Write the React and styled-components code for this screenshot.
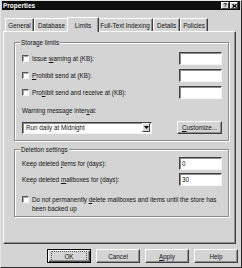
import styled, { createGlobalStyle } from "styled-components";

const GlobalStyle = createGlobalStyle`
  html, body {
    margin: 0;
    padding: 0;
    background: #d4d4d4;
  }
  body {
    font-family: "Liberation Sans", Arial, sans-serif;
    font-size: 6.3px;
    color: #111;
  }
  u {
    text-decoration-thickness: 1px;
    text-underline-offset: 1px;
  }
`;

const Window = styled.div`
  width: 242px;
  height: 268px;
  box-sizing: border-box;
  background: #d4d4d4;
  border: 1px solid;
  border-color: #e4e4e4 #2a2a2a #2a2a2a #e4e4e4;
  display: flex;
  flex-direction: column;
`;

const TitleBar = styled.div`
  height: 9px;
  margin: 0 1px;
  padding: 0 2px 0 1px;
  background: #0e0e0e;
  display: flex;
  align-items: center;
  justify-content: space-between;
`;

const TitleText = styled.span`
  color: #fff;
  font-weight: bold;
  font-size: 6.5px;
  line-height: 9px;
`;

const TitleButtons = styled.div`
  display: flex;
  gap: 1px;
`;

const TitleButton = styled.div`
  width: 8px;
  height: 7px;
  box-sizing: border-box;
  background: #d4d4d4;
  border: 1px solid;
  border-color: #fff #404040 #404040 #fff;
  display: flex;
  align-items: center;
  justify-content: center;
  font-weight: bold;
  font-size: 6px;
  line-height: 5px;
  color: #000;
`;

const TabStrip = styled.div`
  height: 15px;
  margin-top: 6px;
  padding-left: 4px;
  display: flex;
  align-items: flex-end;
`;

const Tab = styled.div`
  width: ${({ $w }) => $w}px;
  height: ${({ $active }) => ($active ? 15 : 13)}px;
  box-sizing: border-box;
  margin: ${({ $active }) => ($active ? "0 -2px -1px -2px" : "0")};
  ${({ $active }) => $active && "padding: 0 2px;"}
  position: relative;
  z-index: ${({ $active }) => ($active ? 2 : 0)};
  background: #d4d4d4;
  border-top: 1px solid #fff;
  border-left: 1px solid #fff;
  border-right: 1px solid #404040;
  box-shadow: inset -1px 0 0 #909090;
  display: flex;
  align-items: center;
  justify-content: center;
  line-height: 7px;
  white-space: nowrap;
`;

const Panel = styled.div`
  height: 213px;
  margin: 0 5px 0 2px;
  box-sizing: border-box;
  border: 1px solid;
  border-color: #fff #404040 #404040 #fff;
  box-shadow: inset -1px -1px 0 #909090;
  padding: 0 6px 0 10px;
  display: flex;
  flex-direction: column;
  position: relative;
  z-index: 1;
`;

const Group = styled.div`
  margin-top: ${({ $mt }) => $mt}px;
  border: 1px solid #8c8c8c;
  box-shadow: inset 1px 1px 0 #fff, 1px 1px 0 #fff;
  padding: 0 6px ${({ $pb }) => $pb}px 7px;
  display: flex;
  flex-direction: column;
`;

const Legend = styled.div`
  align-self: flex-start;
  margin: -4px 0 0 -2px;
  padding: 0 1px;
  line-height: 7px;
  background: #d4d4d4;
`;

const Row = styled.div`
  height: 13px;
  margin-top: ${({ $mt }) => $mt}px;
  display: flex;
  align-items: center;
  justify-content: space-between;
`;

const CheckLabel = styled.label`
  display: flex;
  align-items: ${({ $top }) => ($top ? "flex-start" : "center")};
  gap: 3px;
  line-height: ${({ $top }) => ($top ? 9 : 7)}px;
  margin-top: ${({ $mt }) => $mt || 0}px;
  white-space: nowrap;
`;

const CheckBox = styled.span`
  flex: none;
  width: 7px;
  height: 7px;
  box-sizing: border-box;
  background: #fff;
  border: 1px solid;
  border-color: #555 #f4f4f4 #f4f4f4 #555;
  box-shadow: inset 1px 1px 0 #a8a8a8;
  margin-top: ${({ $mt }) => $mt || 0}px;
`;

const TextField = styled.div`
  width: 43px;
  height: 13px;
  box-sizing: border-box;
  background: #fff;
  border: 1px solid;
  border-color: #404040 #f4f4f4 #f4f4f4 #404040;
  box-shadow: inset 1px 1px 0 #8c8c8c;
  padding-left: 2px;
  line-height: 11px;
`;

const Label = styled.div`
  line-height: 6px;
  margin-top: ${({ $mt }) => $mt || 0}px;
`;

const Combo = styled.div`
  width: 130px;
  height: 12px;
  box-sizing: border-box;
  background: #fff;
  border: 1px solid;
  border-color: #404040 #f4f4f4 #f4f4f4 #404040;
  box-shadow: inset 1px 1px 0 #8c8c8c;
  display: flex;
  align-items: center;
  justify-content: space-between;
  padding: 1px 1px 1px 3px;
`;

const DropButton = styled.div`
  width: 8px;
  height: 9px;
  box-sizing: border-box;
  background: #d4d4d4;
  border: 1px solid;
  border-color: #fff #404040 #404040 #fff;
  display: flex;
  align-items: center;
  justify-content: center;
`;

const Button = styled.div`
  width: ${({ $w }) => $w}px;
  height: ${({ $h }) => $h || 14}px;
  box-sizing: border-box;
  background: #d4d4d4;
  border: 1px solid;
  border-color: ${({ $default }) =>
    $default ? "#000" : "#fff #404040 #404040 #fff"};
  box-shadow: ${({ $default }) =>
    $default
      ? "inset 1px 1px 0 #fff, inset -1px -1px 0 #404040, inset -2px -2px 0 #909090"
      : "inset -1px -1px 0 #909090"};
  display: flex;
  align-items: center;
  justify-content: center;
  line-height: 7px;
`;

const FocusRing = styled.span`
  padding: 1px 12px;
  outline: 1px dotted #555;
  outline-offset: 0;
`;

const Footer = styled.div`
  margin-top: 5px;
  padding-right: 3px;
  display: flex;
  justify-content: flex-end;
  gap: 5px;
`;

const tabs = [
  { label: "General", w: 29 },
  { label: "Database", w: 35 },
  { label: "Limits", w: 32, active: true },
  { label: "Full-Text Indexing", w: 56 },
  { label: "Details", w: 27 },
  { label: "Policies", w: 28 },
];

function Arrow() {
  return (
    <svg width="5" height="3" viewBox="0 0 5 3">
      <path d="M0 0h5L2.5 3z" fill="#000" />
    </svg>
  );
}

function CloseGlyph() {
  return (
    <svg width="5" height="4" viewBox="0 0 5 4">
      <path d="M0.5 0.3L4.5 3.7M4.5 0.3L0.5 3.7" stroke="#000" strokeWidth="1.2" />
    </svg>
  );
}

export default function App() {
  return (
    <>
      <GlobalStyle />
      <Window>
        <TitleBar>
          <TitleText>Properties</TitleText>
          <TitleButtons>
            <TitleButton>?</TitleButton>
            <TitleButton>
              <CloseGlyph />
            </TitleButton>
          </TitleButtons>
        </TitleBar>

        <TabStrip>
          {tabs.map((t) => (
            <Tab key={t.label} $w={t.w} $active={t.active}>
              {t.label}
            </Tab>
          ))}
        </TabStrip>

        <Panel>
          <Group $mt={10} $pb={6}>
            <Legend>Storage limits</Legend>
            <Row $mt={6}>
              <CheckLabel>
                <CheckBox />
                <span>
                  Issue <u>w</u>arning at (KB):
                </span>
              </CheckLabel>
              <TextField />
            </Row>
            <Row $mt={4}>
              <CheckLabel>
                <CheckBox />
                <span>
                  <u>P</u>rohibit send at (KB):
                </span>
              </CheckLabel>
              <TextField />
            </Row>
            <Row $mt={4}>
              <CheckLabel>
                <CheckBox />
                <span>
                  Pro<u>h</u>ibit send and receive at (KB):
                </span>
              </CheckLabel>
              <TextField />
            </Row>
            <Label $mt={9}>
              Warning message inter<u>v</u>al:
            </Label>
            <Row $mt={7}>
              <Combo>
                <span>Run daily at Midnight</span>
                <DropButton>
                  <Arrow />
                </DropButton>
              </Combo>
              <Button $w={45} $h={13}>
                <span>
                  <u>C</u>ustomize...
                </span>
              </Button>
            </Row>
          </Group>

          <Group $mt={8} $pb={3}>
            <Legend>Deletion settings</Legend>
            <Row $mt={4}>
              <Label>
                Keep deleted <u>i</u>tems for (days):
              </Label>
              <TextField>0</TextField>
            </Row>
            <Row $mt={3}>
              <Label>
                Keep deleted <u>m</u>ailboxes for (days):
              </Label>
              <TextField>30</TextField>
            </Row>
            <CheckLabel $top $mt={9}>
              <CheckBox $mt={1} />
              <span>
                Do not permanently <u>d</u>elete mailboxes and items until the store has
                <br />
                been backed up
              </span>
            </CheckLabel>
          </Group>
        </Panel>

        <Footer>
          <Button $w={44} $default>
            <FocusRing>OK</FocusRing>
          </Button>
          <Button $w={44}>Cancel</Button>
          <Button $w={44}>
            <span>
              <u>A</u>pply
            </span>
          </Button>
          <Button $w={44}>Help</Button>
        </Footer>
      </Window>
    </>
  );
}
